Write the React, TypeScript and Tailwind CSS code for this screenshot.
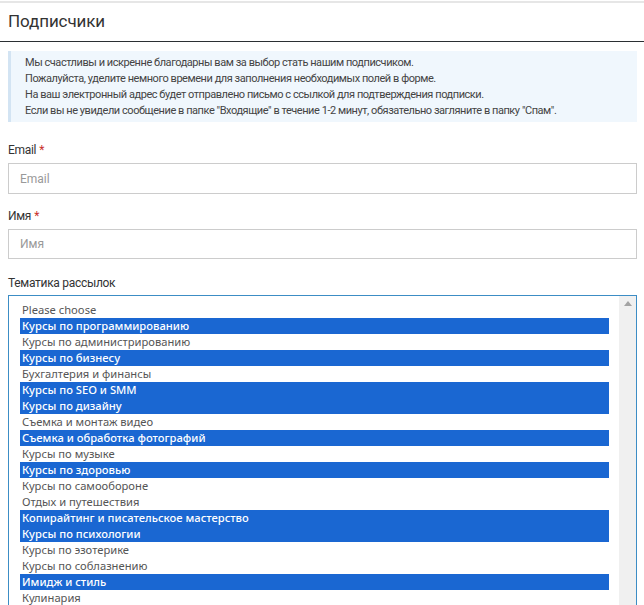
const topics: { label: string; selected?: boolean }[] = [
  { label: "Please choose" },
  { label: "Курсы по программированию", selected: true },
  { label: "Курсы по администрированию" },
  { label: "Курсы по бизнесу", selected: true },
  { label: "Бухгалтерия и финансы" },
  { label: "Курсы по SEO и SMM", selected: true },
  { label: "Курсы по дизайну", selected: true },
  { label: "Съемка и монтаж видео" },
  { label: "Съемка и обработка фотографий", selected: true },
  { label: "Курсы по музыке" },
  { label: "Курсы по здоровью", selected: true },
  { label: "Курсы по самообороне" },
  { label: "Отдых и путешествия" },
  { label: "Копирайтинг и писательское мастерство", selected: true },
  { label: "Курсы по психологии", selected: true },
  { label: "Курсы по эзотерике" },
  { label: "Курсы по соблазнению" },
  { label: "Имидж и стиль", selected: true },
  { label: "Кулинария" },
];

function Label({ text, required, gap = "mb-[5px]" }: { text: string; required?: boolean; gap?: string }) {
  return (
    <label className={`block text-[12px] leading-[16px] tracking-[-0.3px] text-[#333] ${gap}`}>
      {text}
      {required && <span className="text-[#c9302c] ml-[3px]">*</span>}
    </label>
  );
}

export default function App() {
  return (
    <div className="h-[605px] overflow-hidden bg-white font-['Roboto',sans-serif] text-[#333]">
      {/* Header */}
      <div className="border-t-2 border-[#e6e6e6] mt-[1px]">
        <h1 className="h-[38px] px-2 pt-[7px] text-[17px] leading-[22px] tracking-[-0.1px] text-[#333] font-normal">
          Подписчики
        </h1>
      </div>
      <div className="h-px bg-[#2b2f33]" />

      <div className="px-2 pt-[9px]">
        {/* Info box */}
        <div className="bg-[#f0f7fd] border-l-[3px] border-[#d3e4f3] pl-[14px] pt-[4px] pb-[3px] mr-[-1px] text-[11px] leading-[16px] text-[#444] tracking-[-0.45px]">
          <p>Мы счастливы и искренне благодарны вам за выбор стать нашим подписчиком.</p>
          <p>Пожалуйста, уделите немного времени для заполнения необходимых полей в форме.</p>
          <p>На ваш электронный адрес будет отправлено письмо с ссылкой для подтверждения подписки.</p>
          <p>
            Если вы не увидели сообщение в папке "Входящие" в течение 1-2 минут, обязательно загляните в
            папку "Спам".
          </p>
        </div>

        {/* Email */}
        <div className="mt-[20px]">
          <Label text="Email" required />
          <input
            placeholder="Email"
            className="block w-[629px] h-[31px] border border-[#ccc] px-[11px] text-[12px] text-[#333] placeholder:text-[#999] outline-none"
          />
        </div>

        {/* Name */}
        <div className="mt-[14px]">
          <Label text="Имя" required />
          <input
            placeholder="Имя"
            className="block w-[629px] h-[30px] border border-[#ccc] px-[11px] text-[12px] text-[#333] placeholder:text-[#999] outline-none"
          />
        </div>

        {/* Topics */}
        <div className="mt-[16px]">
          <Label text="Тематика рассылок" gap="mb-[4px]" />
          <div className="w-[629px] h-[320px] border border-[#3c8dc5] flex">
            <div className="flex-1 pl-[11px] pr-[10px] pt-[6px] font-['Noto_Sans',sans-serif] text-[11.2px] leading-[16px]">
              {topics.map((t) => (
                <div
                  key={t.label}
                  className={
                    t.selected
                      ? "h-[16px] px-[2px] bg-[#1a67d2] text-white font-medium whitespace-nowrap"
                      : "h-[16px] px-[2px] text-[#555] whitespace-nowrap"
                  }
                >
                  {t.label}
                </div>
              ))}
            </div>
            <div className="w-[17px] bg-[#f0f0f0] flex justify-center pt-[5px]">
              <svg width="8" height="5" viewBox="0 0 8 5">
                <path d="M4 0 L8 5 L0 5 Z" fill="#a3a3a3" />
              </svg>
            </div>
          </div>
        </div>
      </div>
    </div>
  );
}
